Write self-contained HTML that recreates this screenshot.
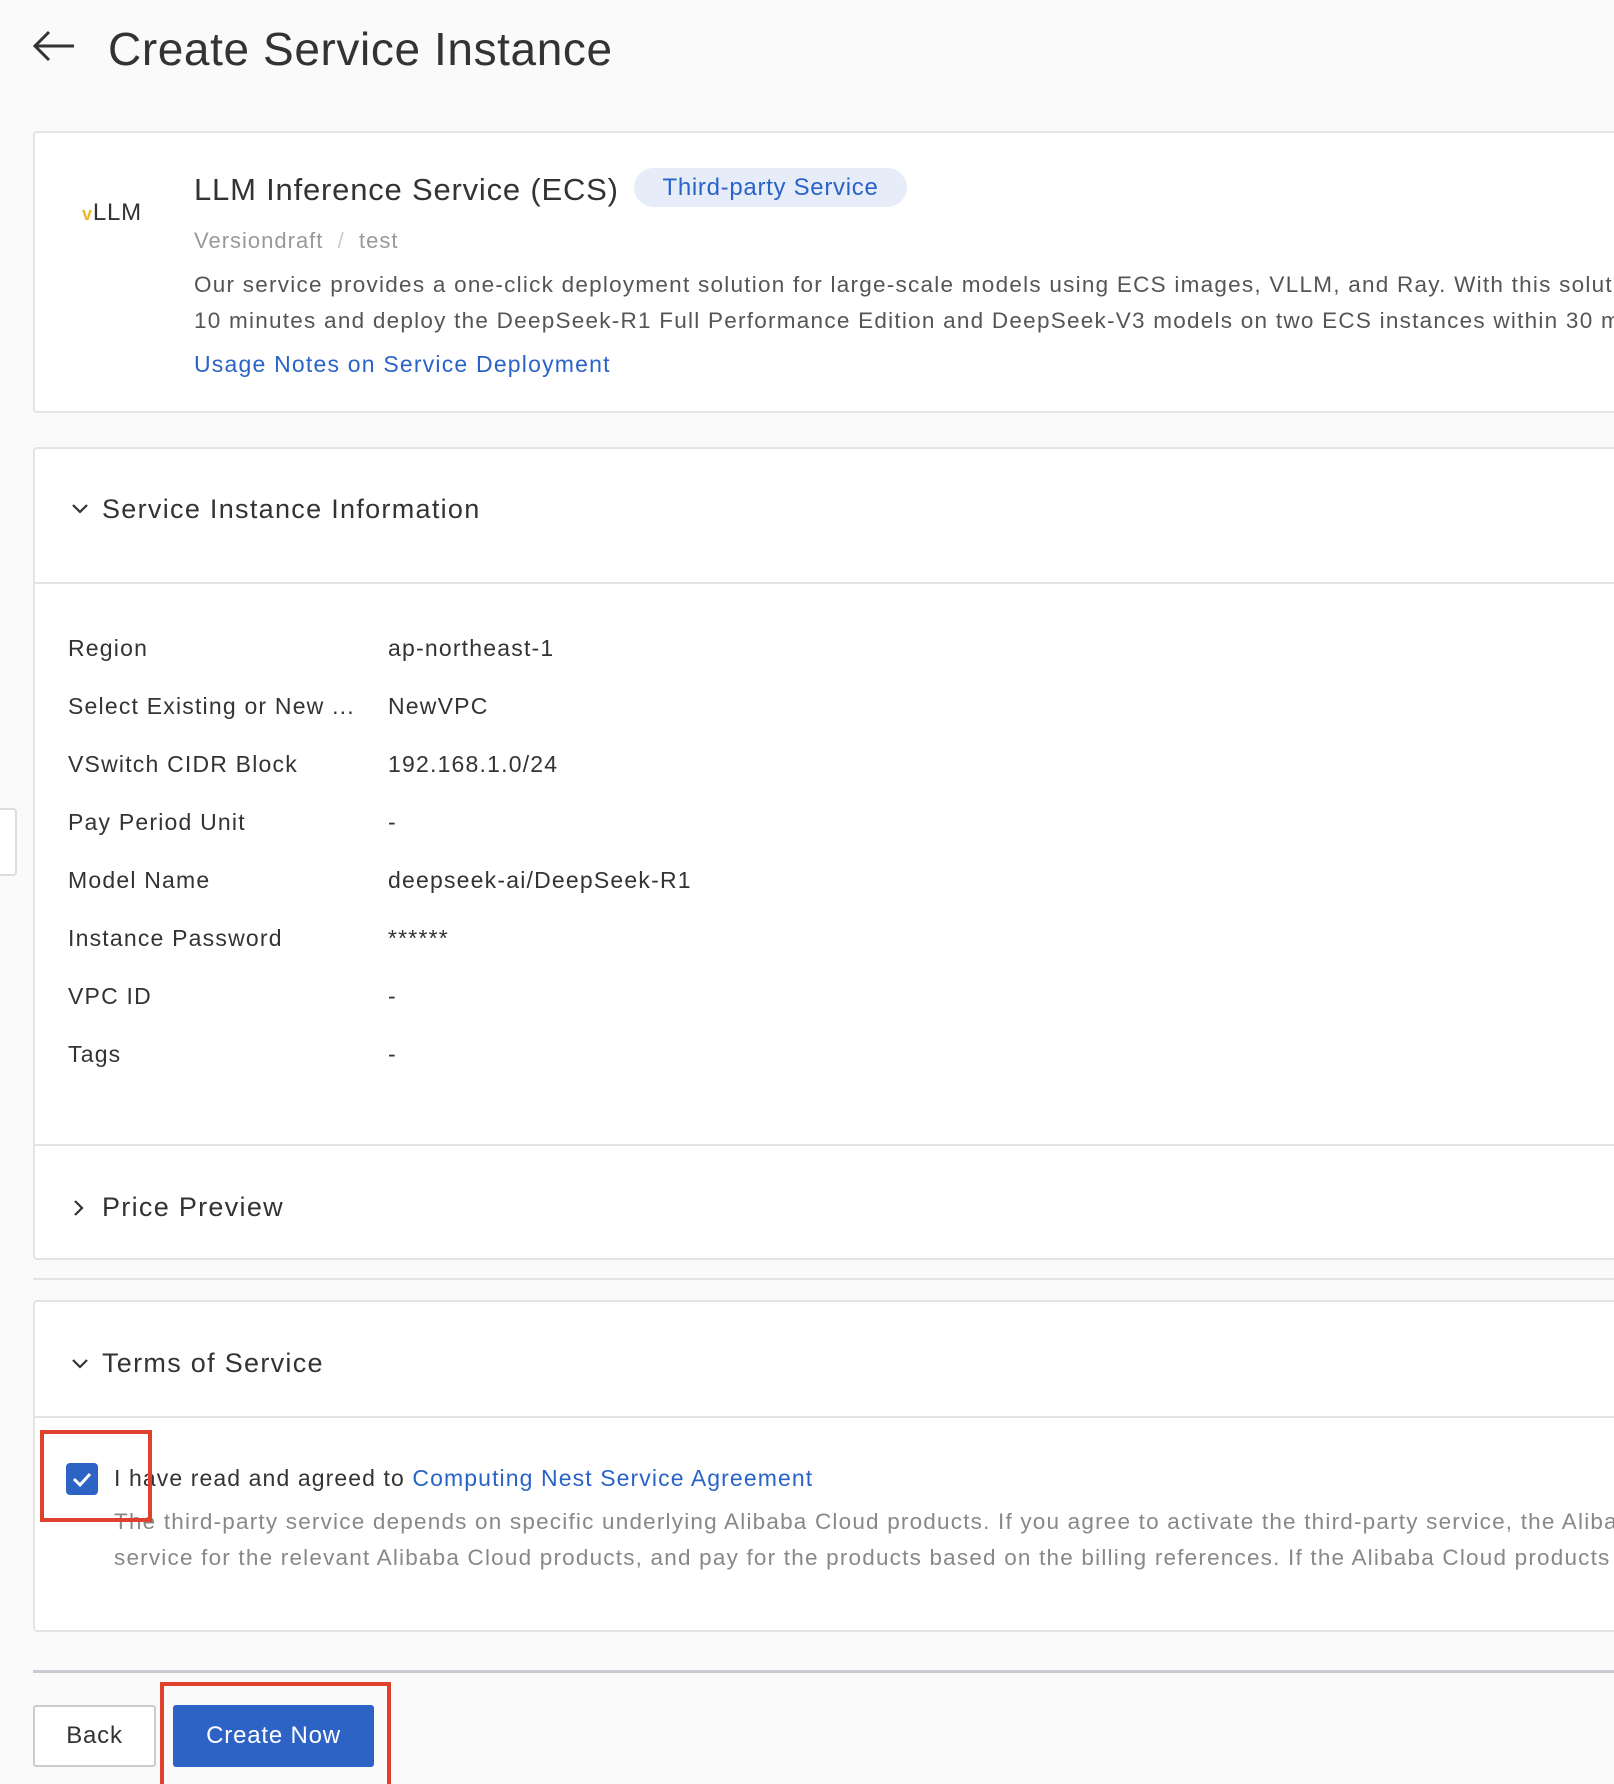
<!DOCTYPE html>
<html><head><meta charset="utf-8"><style>
*{box-sizing:border-box;margin:0;padding:0}
html,body{width:1614px;height:1784px;overflow:hidden}
body{background:#fafafa;font-family:"Liberation Sans",sans-serif;color:#333;position:relative}
.a{position:absolute;white-space:nowrap}
.clip{overflow:hidden}
.card{position:absolute;left:33px;width:1584px;background:#fff;border:2px solid #e4e4e4;border-right:none;border-radius:4px 0 0 4px}
.hr{position:absolute;left:33px;width:1581px;height:2px;background:#e4e4e4}
.lbl{position:absolute;left:68px;font-size:23px;color:#333;letter-spacing:1.2px}
.val{position:absolute;left:388px;font-size:23px;color:#333;letter-spacing:1.2px}
</style></head><body>
<svg class="a" style="left:32px;top:29px" width="44" height="34" viewBox="0 0 44 34"><path d="M42 17H4M17 3L3 17l14 14" fill="none" stroke="#333" stroke-width="3"/></svg>
<div class="a" style="left:108px;top:22px;font-size:46px;color:#333;letter-spacing:0.6px">Create Service Instance</div>

<div class="card" style="top:131px;height:282px"></div>
<div class="a" style="left:82px;top:199px;font-size:24px;color:#333;letter-spacing:0.8px"><span style="color:#f0b429;font-size:18px;font-weight:bold">v</span>LLM</div>
<div class="a" style="left:194px;top:172px;font-size:31px;color:#333;letter-spacing:0.8px">LLM Inference Service (ECS)</div>
<div class="a" style="left:634px;top:168px;width:273px;height:39px;border-radius:20px;background:#e6edf8;color:#2a63c8;font-size:24px;line-height:40px;text-align:center;letter-spacing:0.7px">Third-party Service</div>
<div class="a" style="left:194px;top:228px;font-size:22px;color:#999;letter-spacing:1px">Versiondraft <span style="color:#ccc">&nbsp;/&nbsp;</span> test</div>
<div class="a clip" style="left:194px;top:272px;width:1420px;font-size:22.5px;color:#555;letter-spacing:1.25px">Our service provides a one-click deployment solution for large-scale models using ECS images, VLLM, and Ray. With this solution, you can</div>
<div class="a clip" style="left:194px;top:308px;width:1420px;font-size:22.5px;color:#555;letter-spacing:1.25px">10 minutes and deploy the DeepSeek-R1 Full Performance Edition and DeepSeek-V3 models on two ECS instances within 30 minutes.</div>
<div class="a" style="left:194px;top:351px;font-size:23px;color:#2a63c8;letter-spacing:1.2px">Usage Notes on Service Deployment</div>

<div class="card" style="top:447px;height:813px"></div>
<svg class="a" style="left:70px;top:502px" width="20" height="14" viewBox="0 0 20 14"><path d="M3 3l7 7 7-7" fill="none" stroke="#333" stroke-width="2.2"/></svg>
<div class="a" style="left:102px;top:494px;font-size:27px;color:#333;letter-spacing:1.3px">Service Instance Information</div>
<div class="hr" style="top:582px"></div>
<div class="lbl" style="top:635px">Region</div><div class="val" style="top:635px">ap-northeast-1</div>
<div class="lbl" style="top:693px">Select Existing or New ...</div><div class="val" style="top:693px">NewVPC</div>
<div class="lbl" style="top:751px">VSwitch CIDR Block</div><div class="val" style="top:751px">192.168.1.0/24</div>
<div class="lbl" style="top:809px">Pay Period Unit</div><div class="val" style="top:809px">-</div>
<div class="lbl" style="top:867px">Model Name</div><div class="val" style="top:867px">deepseek-ai/DeepSeek-R1</div>
<div class="lbl" style="top:925px">Instance Password</div><div class="val" style="top:925px">******</div>
<div class="lbl" style="top:983px">VPC ID</div><div class="val" style="top:983px">-</div>
<div class="lbl" style="top:1041px">Tags</div><div class="val" style="top:1041px">-</div>
<div class="hr" style="top:1144px"></div>
<svg class="a" style="left:72px;top:1198px" width="14" height="20" viewBox="0 0 14 20"><path d="M3 3l7 7-7 7" fill="none" stroke="#333" stroke-width="2.2"/></svg>
<div class="a" style="left:102px;top:1192px;font-size:27px;color:#333;letter-spacing:1.3px">Price Preview</div>
<div class="hr" style="top:1278px"></div>

<div class="a" style="left:0;top:808px;width:17px;height:68px;background:#fff;border:2px solid #ddd;border-left:none;border-radius:0 4px 4px 0"></div>

<div class="card" style="top:1300px;height:332px"></div>
<svg class="a" style="left:70px;top:1357px" width="20" height="14" viewBox="0 0 20 14"><path d="M3 3l7 7 7-7" fill="none" stroke="#333" stroke-width="2.2"/></svg>
<div class="a" style="left:102px;top:1348px;font-size:27px;color:#333;letter-spacing:1.3px">Terms of Service</div>
<div class="hr" style="top:1416px"></div>
<div class="a" style="left:66px;top:1463px;width:32px;height:32px;background:#2e63c6;border-radius:4px"></div>
<svg class="a" style="left:66px;top:1463px" width="32" height="32" viewBox="0 0 32 32"><path d="M8 16l6 6 10-11" fill="none" stroke="#fff" stroke-width="3"/></svg>
<div class="a" style="left:114px;top:1465px;font-size:23px;color:#333;letter-spacing:1.1px">I have read and agreed to <span style="color:#2a63c8">Computing Nest Service Agreement</span></div>
<div class="a clip" style="left:114px;top:1509px;width:1500px;font-size:22.5px;color:#888;letter-spacing:1.2px">The third-party service depends on specific underlying Alibaba Cloud products. If you agree to activate the third-party service, the Alibaba</div>
<div class="a clip" style="left:114px;top:1545px;width:1500px;font-size:22.5px;color:#888;letter-spacing:1.2px">service for the relevant Alibaba Cloud products, and pay for the products based on the billing references. If the Alibaba Cloud products</div>
<div class="a" style="left:40px;top:1430px;width:112px;height:92px;border:4px solid #e0412c"></div>

<div class="a" style="left:33px;top:1670px;width:1581px;height:3px;background:#c8ccd2"></div>
<div class="a" style="left:33px;top:1705px;width:123px;height:62px;background:#fff;border:2px solid #ccc;border-radius:3px;font-size:24px;line-height:58px;text-align:center;color:#333;letter-spacing:0.8px">Back</div>
<div class="a" style="left:173px;top:1705px;width:201px;height:62px;background:#2e63c6;border-radius:3px;font-size:24px;line-height:62px;text-align:center;color:#fff;letter-spacing:0.8px">Create Now</div>
<div class="a" style="left:160px;top:1682px;width:231px;height:102px;border:4px solid #e0412c;border-bottom:none"></div>
</body></html>
